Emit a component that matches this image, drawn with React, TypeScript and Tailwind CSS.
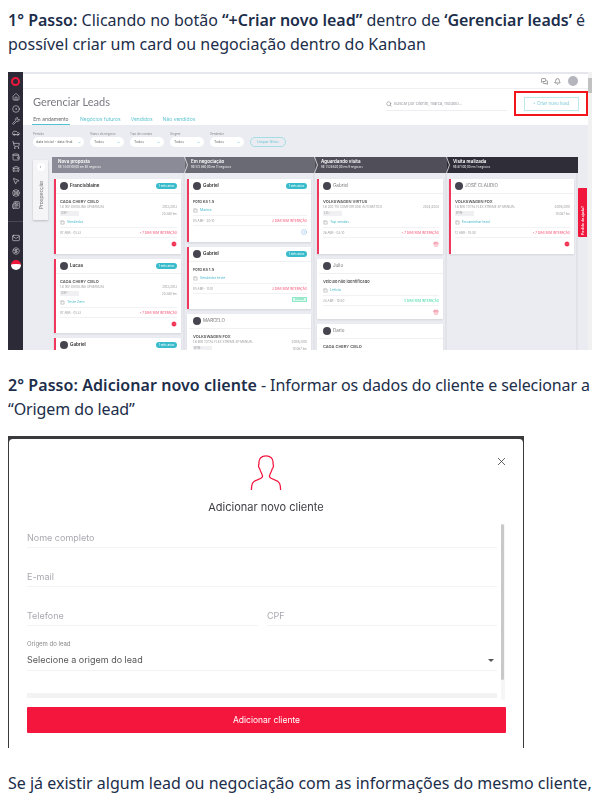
import {
  BadgeDollarSign,
  Briefcase,
  Car,
  CarFront,
  ChevronDown,
  CircleDot,
  Gift,
  Home,
  LifeBuoy,
  Mail,
  MessagesSquare,
  MinusCircle,
  MousePointer2,
  Newspaper,
  Search,
  Bell,
  ShoppingCart,
  Wallet,
  Wrench,
  X,
} from "lucide-react";

const sidebarTop = [Home, CircleDot, Wrench, Car, ShoppingCart, Wallet, CarFront, MousePointer2, LifeBuoy, Newspaper];
const sidebarBottom = [Mail, BadgeDollarSign];
const filters = [
  { label: "Status do negócio", width: "w-[34px]" },
  { label: "Tipo de contato", width: "w-[34px]" },
  { label: "Origem", width: "w-[34px]" },
  { label: "Vendedor", width: "w-[34px]" },
];

interface CardData {
  name: string;
  muted?: boolean;
  badge?: boolean;
  model?: string;
  detail?: string;
  year?: string;
  plate?: string;
  km?: string;
  seller?: string;
  date?: string;
  status?: string;
  green?: boolean;
  accent?: boolean;
  footer?: "stop" | "gift" | "tag" | "info";
  height: string;
}

const columns: { title: string; sub: string; color: string; width: string; cards: CardData[] }[] = [
  {
    title: "Nova proposta",
    sub: "R$ 1.449.149,00 em 85 negócios",
    color: "bg-[#8a8b96]",
    width: "w-[133px]",
    cards: [
      { name: "Francisblaine", badge: true, accent: true, model: "CAOA CHERY CIELO", detail: "1.6 16V GASOLINA 4P MANUAL", year: "2012/2013", plate: "OXF-", km: "20.380 km", seller: "Vendedor", date: "07 ABR - 01:33", status: "+ 7 DIAS SEM INTERAÇÃO", footer: "stop", height: "h-[75px]" },
      { name: "Lucas", badge: true, accent: true, model: "CAOA CHERY CIELO", detail: "1.6 16V GASOLINA 4P MANUAL", year: "2012/2013", plate: "OXF-", km: "20.380 km", seller: "Teste Zero", date: "07 ABR - 01:33", status: "+ 7 DIAS SEM INTERAÇÃO", footer: "stop", height: "h-[74px]" },
      { name: "Gabriel", badge: true, accent: true, height: "h-[20px]" },
    ],
  },
  {
    title: "Em negociação",
    sub: "R$ 573.860,00 em 11 negócios",
    color: "bg-[#6a6a75]",
    width: "w-[130px]",
    cards: [
      { name: "Gabriel", badge: true, accent: true, model: "Ford Ka 1.5", seller: "Marina", date: "05 ABR - 20:10", status: "3 DIAS SEM INTERAÇÃO", footer: "info", height: "h-[63px]" },
      { name: "Gabriel", badge: true, accent: true, model: "Ford Ka 1.5", seller: "Vendedor teste", date: "05 ABR - 11:10", status: "3 DIAS SEM INTERAÇÃO", footer: "tag", height: "h-[62px]" },
      { name: "MARCELO", muted: true, model: "VOLKSWAGEN FOX", detail: "1.6 MSI TOTAL FLEX XTREME 4P MANUAL", year: "2009/2010", plate: "BYN-", km: "10.087 km", height: "h-[40px]" },
    ],
  },
  {
    title: "Aguardando visita",
    sub: "R$ 1.528.620,00 em 9 negócios",
    color: "bg-[#4f4e59]",
    width: "w-[132px]",
    cards: [
      { name: "Gabriel", muted: true, accent: true, model: "VOLKSWAGEN VIRTUS", detail: "1.6 200 TSI COMFORTLINE AUTOMÁTICO", year: "2024/2024", plate: "LLL-", seller: "Top vendas", date: "28 ABR - 03:10", status: "+ 7 DIAS SEM INTERAÇÃO", footer: "gift", height: "h-[75px]" },
      { name: "Julio", muted: true, model: "Veículo não identificado", seller: "Leticia", date: "24 ABR - 10:50", status: "5 DIAS SEM INTERAÇÃO", green: true, footer: "gift", height: "h-[60px]" },
      { name: "Dario", muted: true, model: "CAOA CHERY CIELO", height: "h-[30px]" },
    ],
  },
  {
    title: "Visita realizada",
    sub: "R$ 87.500,00 em 1 negócios",
    color: "bg-[#2f2d38]",
    width: "w-[131px]",
    cards: [
      { name: "JOSÉ CLAUDIO", muted: true, accent: true, model: "VOLKSWAGEN FOX", detail: "1.6 MSI TOTAL FLEX XTREME 4P MANUAL", year: "2009/2010", plate: "BYN-", km: "10.087 km", seller: "Encaminhar lead", date: "12 ABR - 10:50", status: "+ 7 DIAS SEM INTERAÇÃO", footer: "stop", height: "h-[75px]" },
    ],
  },
];

function LeadCard({ card }: { card: CardData }) {
  return (
    <div
      className={`${card.height} shrink-0 bg-white shadow-[0_1px_2px_rgba(0,0,0,0.1)] flex flex-col border-l-2 ${
        card.accent ? "border-[#f0385f]" : "border-white"
      }`}
    >
      <div className="h-[15px] shrink-0 flex items-center justify-between px-[4px] border-b border-[#f0f0f3]">
        <div className="flex items-center gap-[2px]">
          <div className="w-[8px] h-[8px] rounded-full bg-[#45444f]" />
          <span className={`text-[4.5px] ${card.muted ? "text-[#777]" : "font-bold text-[#444]"}`}>{card.name}</span>
        </div>
        {card.badge && (
          <span className="w-[21px] h-[6px] rounded-full bg-[#38bccb] text-white text-[3px] leading-[6px] text-center">1 mês ativo</span>
        )}
      </div>
      {card.model && (
        <div className="px-[4px] pt-[5px] flex-1 flex flex-col">
          <div className="text-[4px] leading-[6px] font-semibold text-[#555] whitespace-nowrap">{card.model}</div>
          {card.detail && (
            <>
              <div className="flex justify-between text-[3px] leading-[5px] text-[#999] whitespace-nowrap">
                <span>{card.detail}</span>
                <span>{card.year}</span>
              </div>
              <div className="flex justify-between items-center h-[7px] text-[3px] text-[#999]">
                <span className="w-[19px] h-[5px] bg-[#f0f0f3] pl-[1px] leading-[5px]">{card.plate}</span>
                <span>{card.km}</span>
              </div>
            </>
          )}
          {card.seller && (
            <div className="flex items-center gap-[2px] h-[10px] text-[3.5px] text-[#45b8c8]">
              <Briefcase className="w-[5px] h-[5px] text-[#999]" strokeWidth={1.5} />
              <span>{card.seller}</span>
            </div>
          )}
          {card.date && (
            <div className="flex justify-between items-center h-[11px] border-y border-[#f2f2f4] text-[3px]">
              <span className="text-[#999]">{card.date}</span>
              <span className={card.green ? "text-[#2fd3a0]" : "text-[#f5476b]"}>{card.status}</span>
            </div>
          )}
          {card.footer && (
            <div className="flex justify-end pt-[3px]">
              {card.footer === "stop" && <MinusCircle className="w-[6px] h-[6px] text-white fill-[#f0163c]" strokeWidth={1.5} />}
              {card.footer === "gift" && <Gift className="w-[6px] h-[6px] text-[#f0627f]" strokeWidth={1.5} />}
              {card.footer === "info" && <CircleDot className="w-[6px] h-[6px] text-[#5b9bd5]" strokeWidth={1.5} />}
              {card.footer === "tag" && (
                <span className="w-[15px] h-[5px] bg-[#d8f8ec] border border-[#8fe8c8] text-[2.5px] leading-[3px] text-center text-[#2fc99a]">OUTRO</span>
              )}
            </div>
          )}
        </div>
      )}
    </div>
  );
}

function KanbanScreenshot() {
  return (
    <div className="w-[584px] h-[278px] overflow-hidden flex bg-[#ebecf1] font-['Inter',sans-serif] blur-[0.5px]">
      <aside className="w-[15px] shrink-0 bg-[#2c2a36] flex flex-col items-center pt-[5px]">
        <div className="w-[9px] h-[9px] rounded-full border-2 border-[#f0163c] mb-[7px]" />
        <div className="flex flex-col items-center gap-[4px] text-[#dcdce0]">
          {sidebarTop.map((Icon, i) => (
            <Icon key={i} className="w-[8px] h-[8px]" strokeWidth={1.8} />
          ))}
        </div>
        <div className="w-full h-px bg-[#4a4854] mt-[12px] mb-[12px]" />
        <div className="flex flex-col items-center gap-[5px] text-[#dcdce0]">
          {sidebarBottom.map((Icon, i) => (
            <Icon key={i} className="w-[8px] h-[8px]" strokeWidth={1.8} />
          ))}
          <div className="w-[10px] h-[10px] rounded-full bg-white border-t-[4px] border-[#f0163c]" />
        </div>
      </aside>

      <div className="w-[565px] shrink-0 flex flex-col relative">
        <div className="h-[16px] shrink-0 bg-white border-t-2 border-[#e6e7ec] flex items-center justify-end gap-[6px] pr-[10px]">
          <MessagesSquare className="w-[7px] h-[7px] text-[#555]" strokeWidth={2} />
          <Bell className="w-[7px] h-[7px] text-[#555] mr-[1px]" strokeWidth={2} />
          <div className="w-[10px] h-[10px] rounded-full bg-[#b5b5bd]" />
        </div>
        <header className="h-[37px] shrink-0 bg-white border-t border-[#f0f0f3] pl-[10px] flex flex-col">
          <div className="h-[26px] flex items-center justify-between">
            <h2 className="text-[11px] text-[#7a7a84] font-['Lato',sans-serif]">Gerenciar Leads</h2>
            <div className="flex items-center">
              <div className="w-[121px] h-[14px] border-b border-[#eeeef1] flex items-center gap-[2px] text-[4px] text-[#9a9aa3] mr-[7px] mt-[4px]">
                <Search className="w-[6px] h-[6px] text-[#777]" />
                <span>Buscar por cliente, marca, modelo...</span>
              </div>
              <div className="w-[74px] h-[25px] border-2 border-[#f4141b] flex items-center justify-center mt-[3px]">
                <span className="w-[55px] h-[14px] border border-[#bfe8ec] text-[4.5px] leading-[12px] text-center text-[#7fcbd5]">+ Criar novo lead</span>
              </div>
            </div>
          </div>
          <nav className="flex gap-[10px] text-[5px] text-[#62c5d2] -mt-[1px]">
            <span className="w-[38px] h-[11px] leading-[10px] text-center text-[#666] border-b border-[#55c0cf] -ml-[1px]">Em andamento</span>
            <span className="leading-[10px]">Negócios futuros</span>
            <span className="leading-[10px]">Vendidos</span>
            <span className="leading-[10px]">Não vendidos</span>
          </nav>
        </header>

        <div className="h-[32px] shrink-0 pl-[10px] pt-[7px] flex gap-[6px] items-start">
          <div>
            <div className="text-[3px] leading-[5px] text-[#888]">Período</div>
            <div className="w-[51px] h-[10px] bg-white rounded-full flex items-center justify-between px-[3px] text-[3.5px] text-[#666]">
              <span className="whitespace-nowrap">data inicial - data final</span>
              <ChevronDown className="w-[3px] h-[3px] text-[#45b8c8]" strokeWidth={4} />
            </div>
          </div>
          {filters.map((f) => (
            <div key={f.label}>
              <div className="text-[3px] leading-[5px] text-[#888] whitespace-nowrap">{f.label}</div>
              <div className={`${f.width} h-[10px] bg-white rounded-full flex items-center justify-between px-[4px] text-[3.5px] text-[#666]`}>
                <span>Todos</span>
                <ChevronDown className="w-[3px] h-[3px] text-[#45b8c8]" strokeWidth={4} />
              </div>
            </div>
          ))}
          <div className="w-[36px] h-[10px] mt-[5px] rounded-full border border-[#a5dde4] text-[3.5px] leading-[8px] text-center text-[#62c5d2]">Limpar filtros</div>
        </div>

        <div className="flex pl-[10px] flex-1 min-h-0">
          <div className="w-[15px] h-[60px] mt-[3px] mr-[4px] shrink-0 bg-[#f5f5f8] shadow-[0_1px_2px_rgba(0,0,0,0.2)] flex flex-col items-center pt-[3px]">
            <div className="w-[8px] h-[8px] rounded-full bg-white text-[4px] leading-[8px] text-center text-[#666]">‹</div>
            <span className="mt-[10px] text-[5px] text-[#777] [writing-mode:vertical-rl] rotate-180">Prospecção</span>
          </div>
          {columns.map((col, idx) => (
            <div key={col.title} className={`${col.width} shrink-0 flex flex-col relative`}>
              <div className={`${col.color} h-[16px] shrink-0 pl-[6px] pt-[2px] text-white`}>
                <div className="text-[4.5px] leading-[6px] font-semibold whitespace-nowrap">{col.title}</div>
                <div className="text-[2.8px] leading-[5px] whitespace-nowrap opacity-90">{col.sub}</div>
              </div>
              {idx > 0 && (
                <svg className="absolute -left-[1px] top-0 w-[5px] h-[16px]" viewBox="0 0 5 16" fill="none">
                  <path d="M0.5 0 L3.5 8 L0.5 16" stroke="#ffffff" strokeWidth="0.7" />
                </svg>
              )}
              <div className="flex-1 flex flex-col gap-[5px] pt-[6px] px-[2px] border-r-2 border-[#e2e3e8]">
                {col.cards.map((card, i) => (
                  <LeadCard key={i} card={card} />
                ))}
              </div>
            </div>
          ))}
        </div>

        <div className="absolute right-[1px] top-[116px] w-[9px] h-[49px] bg-[#f0163c] rounded-l-[1px] flex flex-col items-center justify-end pb-[2px]">
          <span className="text-[3.5px] font-semibold text-white [writing-mode:vertical-rl] rotate-180 whitespace-nowrap">Pedido de ajuda?</span>
        </div>
      </div>

      <div className="w-[4px] shrink-0 bg-[#f1f1f1] flex flex-col">
        <div className="h-[6px]" />
        <div className="h-[15px] bg-[#c1c1c1]" />
      </div>
    </div>
  );
}

function FormLine({ label, className }: { label: string; className?: string }) {
  return (
    <div className={`h-[19px] border-b border-[#f3f3f5] text-[9px] leading-[18px] text-[#a8a8b0] ${className ?? ""}`}>{label}</div>
  );
}

function ClientScreenshot() {
  return (
    <div className="w-[516px] h-[312px] bg-[#3a3a3d] pt-[3px] px-px font-['Inter',sans-serif] blur-[0.3px]">
      <div className="h-full bg-white rounded-t-[4px] relative flex flex-col items-center pt-[16px]">
        <X className="absolute right-[15px] top-[16px] w-[13px] h-[13px] text-[#444]" strokeWidth={1.5} />
        <svg className="w-[34px] h-[35px] text-[#f5163e]" viewBox="0 0 34 36" fill="none" stroke="currentColor" strokeWidth="1.3">
          <path d="M2 36 C2 30 3 27 8 25.5 C11 24.5 13 24 13.5 22 C13.5 20 11.5 18 10.5 14 C9.5 13 9 11 9.8 9 C9 3 13 1 17 1 C21 1 25 3 24.2 9 C25 11 24.5 13 23.5 14 C22.5 18 20.5 20 20.5 22 C21 24 23 24.5 26 25.5 C31 27 32 30 32 36" />
        </svg>
        <h3 className="mt-[9px] text-[11px] leading-[16px] text-[#3c3c44]">Adicionar novo cliente</h3>

        <div className="w-full flex-1 min-h-0 flex items-start pl-[18px] pr-[18px] pt-[13px] gap-[4px]">
          <div className="w-[470px] shrink-0 flex flex-col">
            <FormLine label="Nome completo" className="mt-[1px]" />
            <FormLine label="E-mail" className="mt-[20px]" />
            <div className="flex gap-[9px] mt-[20px]">
              <FormLine label="Telefone" className="w-[231px]" />
              <FormLine label="CPF" className="flex-1" />
            </div>
            <div className="mt-[13px] text-[6px] leading-[9px] text-[#888]">Origem do lead</div>
            <div className="h-[21px] mt-[2px] border-b border-[#f3f3f5] flex items-center justify-between pr-[3px] text-[9px] text-[#555]">
              <span>Selecione a origem do lead</span>
              <span className="w-0 h-0 border-x-[3px] border-x-transparent border-t-[3px] border-t-[#555]" />
            </div>
            <div className="h-[5px] mt-[22px] bg-[#f3f3f4]" />
          </div>
          <div className="w-[4px] h-[176px] shrink-0 bg-[#f6f6f6] rounded-full -mt-[4px]">
            <div className="w-[3px] h-[156px] bg-[#c9c9c9] rounded-full" />
          </div>
        </div>

        <div className="self-start ml-[18px] mb-[15px] w-[479px] h-[26px] shrink-0 bg-[#f5163e] rounded-[1px] text-white text-[8.5px] leading-[26px] text-center">Adicionar cliente</div>
      </div>
    </div>
  );
}

export default function App() {
  return (
    <div className="w-[600px] h-[800px] overflow-hidden bg-white px-2 pt-2 text-[16px] leading-[24px] text-[#1c2e4a] font-['Noto_Sans',sans-serif]">
      <p>
        <strong className="font-semibold">1° Passo:</strong> Clicando no botão <strong className="font-semibold">“+Criar novo lead”</strong> dentro de <strong className="font-semibold">‘Gerenciar leads’</strong> é possível criar um card ou negociação dentro do Kanban
      </p>
      <div className="mt-4">
        <KanbanScreenshot />
      </div>
      <p className="mt-[23px] tracking-[-0.1px]">
        <strong className="font-semibold tracking-[0.06px]">2° Passo: Adicionar novo cliente</strong> - Informar os dados do cliente e selecionar a “Origem do lead”
      </p>
      <div className="mt-[15px]">
        <ClientScreenshot />
      </div>
      <p className="mt-[23px]">Se já existir algum lead ou negociação com as informações do mesmo cliente,</p>
    </div>
  );
}
